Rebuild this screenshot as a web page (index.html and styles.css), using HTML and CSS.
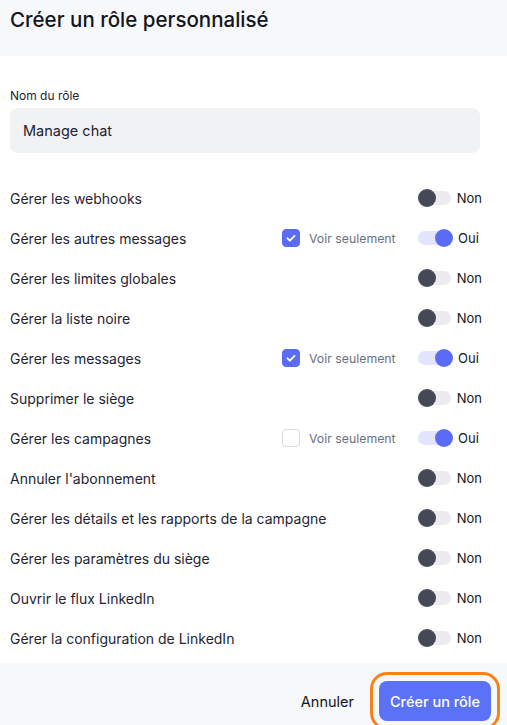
FILE: index.html
```html
<!DOCTYPE html>
<html lang="fr">
<head>
<meta charset="utf-8">
<link rel="stylesheet" href="styles.css">
</head>
<body>
<div class="modal">
  <header class="head"><h1 class="title">Créer un rôle personnalisé</h1></header>
  <main class="content">
    <label class="field-label">Nom du rôle</label>
    <div class="input">Manage chat</div>
    <ul class="perms">
      <li class="row"><span class="name">Gérer les webhooks</span><span class="view"></span><span class="tgl"><span class="track"><span class="knob"></span></span><span class="state">Non</span></span></li>
      <li class="row"><span class="name">Gérer les autres messages</span><span class="view"><span class="cb on"><svg viewBox="0 0 18 18"><path d="M5 9.3l2.7 2.6L13 6.6" /></svg></span><span class="view-txt">Voir seulement</span></span><span class="tgl on"><span class="track"><span class="knob"></span></span><span class="state">Oui</span></span></li>
      <li class="row"><span class="name">Gérer les limites globales</span><span class="view"></span><span class="tgl"><span class="track"><span class="knob"></span></span><span class="state">Non</span></span></li>
      <li class="row"><span class="name">Gérer la liste noire</span><span class="view"></span><span class="tgl"><span class="track"><span class="knob"></span></span><span class="state">Non</span></span></li>
      <li class="row"><span class="name">Gérer les messages</span><span class="view"><span class="cb on"><svg viewBox="0 0 18 18"><path d="M5 9.3l2.7 2.6L13 6.6" /></svg></span><span class="view-txt">Voir seulement</span></span><span class="tgl on"><span class="track"><span class="knob"></span></span><span class="state">Oui</span></span></li>
      <li class="row"><span class="name">Supprimer le siège</span><span class="view"></span><span class="tgl"><span class="track"><span class="knob"></span></span><span class="state">Non</span></span></li>
      <li class="row"><span class="name">Gérer les campagnes</span><span class="view"><span class="cb"></span><span class="view-txt">Voir seulement</span></span><span class="tgl on"><span class="track"><span class="knob"></span></span><span class="state">Oui</span></span></li>
      <li class="row"><span class="name">Annuler l'abonnement</span><span class="view"></span><span class="tgl"><span class="track"><span class="knob"></span></span><span class="state">Non</span></span></li>
      <li class="row"><span class="name">Gérer les détails et les rapports de la campagne</span><span class="view"></span><span class="tgl"><span class="track"><span class="knob"></span></span><span class="state">Non</span></span></li>
      <li class="row"><span class="name">Gérer les paramètres du siège</span><span class="view"></span><span class="tgl"><span class="track"><span class="knob"></span></span><span class="state">Non</span></span></li>
      <li class="row"><span class="name">Ouvrir le flux LinkedIn</span><span class="view"></span><span class="tgl"><span class="track"><span class="knob"></span></span><span class="state">Non</span></span></li>
      <li class="row"><span class="name">Gérer la configuration de LinkedIn</span><span class="view"></span><span class="tgl"><span class="track"><span class="knob"></span></span><span class="state">Non</span></span></li>
    </ul>
  </main>
  <footer class="foot">
    <button class="btn-cancel">Annuler</button>
    <button class="btn-primary">Créer un rôle</button>
  </footer>
</div>
</body>
</html>
```
FILE: styles.css
```css
* { box-sizing: border-box; }
html, body { margin: 0; padding: 0; }
body {
  font-family: Inter, "Noto Sans", sans-serif;
  color: #1d2230;
  background: #ffffff;
  width: 507px;
  overflow: hidden;
}
.modal { display: flex; flex-direction: column; }
.head {
  background: #f7f8fa;
  height: 56px;
  padding: 6px 10px 0;
}
.title {
  margin: 0;
  font-size: 20.5px;
  line-height: 28px;
  font-weight: 500;
  color: #111521;
}
.content {
  padding: 32px 0 5px 10px;
  display: flex;
  flex-direction: column;
}
.field-label {
  font-size: 12px;
  line-height: 16px;
  font-weight: 400;
  color: #1d2230;
}
.input {
  margin-top: 4px;
  width: 470px;
  height: 45px;
  background: #f1f2f4;
  border-radius: 8px;
  padding: 0 13px;
  display: flex;
  align-items: center;
  font-size: 14.5px;
  color: #1d2230;
}
.perms {
  list-style: none;
  margin: 25px 0 0;
  padding: 0;
  width: 472px;
}
.row {
  height: 40px;
  display: flex;
  align-items: center;
}
.name {
  flex: 1;
  font-size: 14px;
  color: #1f2433;
  white-space: nowrap;
}
.view {
  width: 136px;
  display: flex;
  align-items: center;
  gap: 9px;
}
.cb {
  width: 18px;
  height: 18px;
  border-radius: 4px;
  border: 1px solid #d7d9de;
  background: #fff;
  display: flex;
  align-items: center;
  justify-content: center;
}
.cb.on { background: #5a6cf5; border-color: #5a6cf5; }
.cb svg { width: 18px; height: 18px; }
.cb path { fill: none; stroke: #fff; stroke-width: 2; stroke-linecap: round; stroke-linejoin: round; }
.view-txt { font-size: 12.3px; color: #6b7180; }
.tgl {
  width: 64px;
  display: flex;
  align-items: center;
  gap: 6px;
}
.track {
  position: relative;
  width: 34px;
  height: 14px;
  border-radius: 7px;
  background: #ececee;
}
.knob {
  position: absolute;
  top: -2px;
  left: 0;
  width: 18px;
  height: 18px;
  border-radius: 50%;
  background: #454855;
}
.tgl.on .track { background: #e1e4fc; }
.tgl.on .knob { left: 17px; background: #5a6cf5; }
.state { font-size: 13px; color: #111521; }
.foot {
  background: #f7f8fa;
  height: 62px;
  padding: 18px 16px 0 0;
  display: flex;
  justify-content: flex-end;
  align-items: flex-start;
  gap: 12px;
}
.btn-cancel {
  border: 0;
  background: transparent;
  font-family: inherit;
  font-size: 14.5px;
  color: #111521;
  height: 40px;
  padding: 0 13px;
  white-space: nowrap;
}
.btn-primary {
  border: 0;
  background: #5b72f6;
  color: #fff;
  font-family: inherit;
  font-size: 14.5px;
  font-weight: 500;
  height: 40px;
  padding: 0 11px;
  white-space: nowrap;
  border-radius: 8px;
  outline: 3px solid #f7821b;
  outline-offset: 6px;
}
```
